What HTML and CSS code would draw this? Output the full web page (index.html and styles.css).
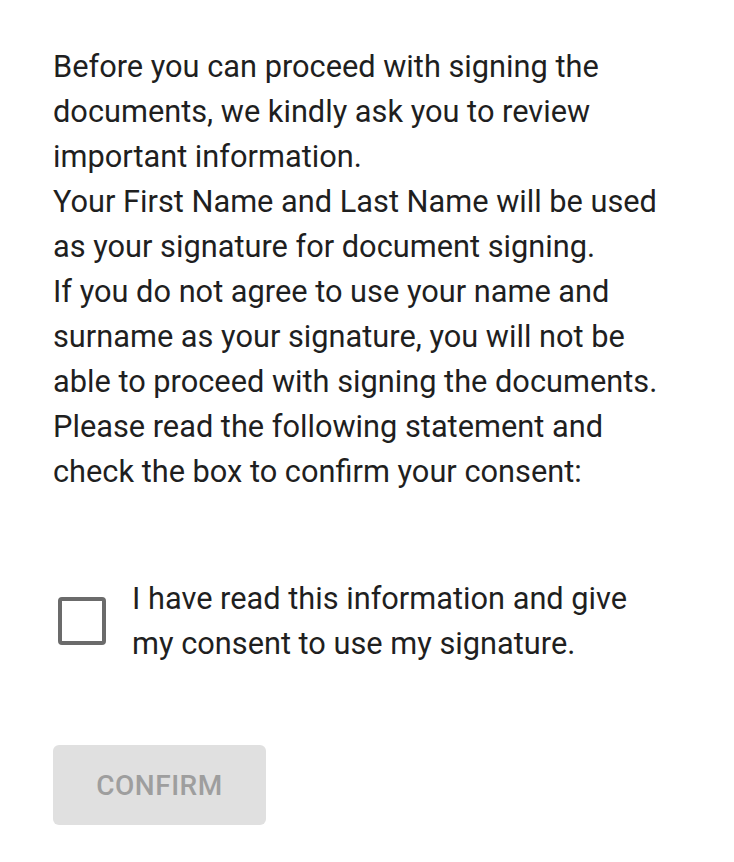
FILE: index.html
```html
<!DOCTYPE html>
<html lang="en">
<head>
<meta charset="utf-8">
<link rel="stylesheet" href="styles.css">
</head>
<body>
<main class="consent">
  <p class="info">Before you can proceed with signing the documents, we kindly ask you to review important information.<br>Your First Name and Last Name will be used as your signature for document signing.<br>If you do not agree to use your name and surname as your signature, you will not be able to proceed with signing the documents.<br>Please read the following statement and check the box to confirm your consent:</p>
  <label class="agree">
    <span class="box"></span>
    <span class="agree-text">I have read this information and give my consent to use my signature.</span>
  </label>
  <button class="confirm" disabled>CONFIRM</button>
</main>
</body>
</html>
```
FILE: styles.css
```css
html, body {
  margin: 0;
  padding: 0;
  background: #ffffff;
}
body {
  font-family: Roboto, "Liberation Sans", sans-serif;
  color: #1f1f1f;
}
.consent {
  padding: 44px 54px 0 53px;
  display: flex;
  flex-direction: column;
  align-items: flex-start;
}
.info {
  margin: 0;
  font-size: 30.75px;
  line-height: 45px;
  width: 624px;
}
.agree {
  margin-top: 82px;
  display: flex;
  align-items: center;
  gap: 26px;
}
.box {
  flex: none;
  width: 48px;
  height: 48px;
  box-sizing: border-box;
  border: 4px solid #6b6b6b;
  border-radius: 4px;
  margin-left: 5px;
}
.agree-text {
  font-size: 30.75px;
  line-height: 45px;
  width: 510px;
}
.confirm {
  margin-top: 79px;
  width: 213px;
  height: 80px;
  border: none;
  border-radius: 6px;
  background: #e0e0e0;
  color: #9e9e9e;
  font-family: Roboto, "Liberation Sans", sans-serif;
  font-size: 28px;
  font-weight: 500;
  letter-spacing: 0.5px;
  padding: 0;
}
```
